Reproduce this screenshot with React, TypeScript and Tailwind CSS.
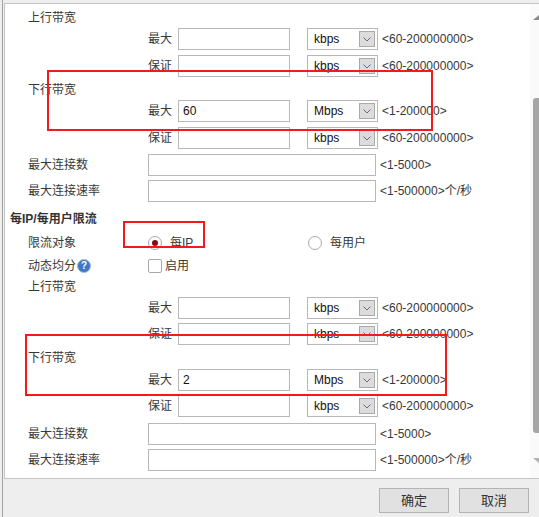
import type { ReactNode } from "react"

const fontStack = "font-['Liberation_Sans','Noto_Sans_CJK_SC',sans-serif]"

function Header({ text, mt }: { text: string; mt: string }) {
  return <div className={`${mt} h-[16px] pl-[23px] pt-[2px] flex items-center leading-none`}>{text}</div>
}

function UnitSelect({ unit }: { unit: string }) {
  return (
    <div className="ml-[17px] w-[71px] h-[22px] border border-[#b8b8b8] bg-white flex items-center justify-between pl-[6px] pr-[2px]">
      <span className="text-[#111]">{unit}</span>
      <span className="w-[16px] h-[16px] bg-[#dcdcdc] border border-[#a9a9a9] flex items-center justify-center">
        <svg width="8" height="5" viewBox="0 0 8 5">
          <path d="M0.5 0.5 L4 4 L7.5 0.5" fill="none" stroke="#6b6b6b" strokeWidth="1" />
        </svg>
      </span>
    </div>
  )
}

function LimitRow({ label, value, unit, range, mt }: { label: string; value?: string; unit: string; range: string; mt: string }) {
  return (
    <div className={`${mt} h-[22px] flex items-center`}>
      <div className="w-[167px] text-right">{label}</div>
      <input
        readOnly
        value={value ?? ""}
        className="ml-[6px] w-[112px] h-[22px] border border-[#b8b8b8] bg-white px-[4px] text-[#111] outline-none"
      />
      <UnitSelect unit={unit} />
      <span className="ml-[4px]">{range}</span>
    </div>
  )
}

function ConnRow({ label, range, mt }: { label: string; range: string; mt: string }) {
  return (
    <div className={`${mt} h-[22px] flex items-center`}>
      <div className="w-[143px] pl-[23px]">{label}</div>
      <input readOnly value="" className="w-[228px] h-[22px] border border-[#b8b8b8] bg-white outline-none" />
      <span className="ml-[4px]">{range}</span>
    </div>
  )
}

function Radio({ checked, children }: { checked?: boolean; children: ReactNode }) {
  return (
    <div className="flex items-center">
      <span className="w-[14px] h-[14px] rounded-full border border-[#a8a8a8] bg-white flex items-center justify-center">
        {checked && <span className="w-[6px] h-[6px] rounded-full bg-[#8b0a0a]" />}
      </span>
      <span className="ml-[8px]">{children}</span>
    </div>
  )
}

function Mark({ className }: { className: string }) {
  return <div className={`absolute border-2 border-[#f21a1a] pointer-events-none ${className}`} />
}

export default function App() {
  return (
    <div className={`relative w-[539px] h-[517px] overflow-hidden bg-[#eeeeee] text-[12px] text-[#383838] ${fontStack}`}>
      <div className="ml-[2px] h-full border-l border-[#a3a3a3] pl-[1px] pt-[3px] flex flex-col">
        <div className="h-[476px] flex border-t border-b border-l border-[#c6c6c6] bg-white">
          <div className="flex-1 flex flex-col">
            <Header text="上行带宽" mt="mt-[5px]" />
            <LimitRow label="最大" unit="kbps" range="<60-200000000>" mt="mt-[3px]" />
            <LimitRow label="保证" unit="kbps" range="<60-200000000>" mt="mt-[5px]" />
            <Header text="下行带宽" mt="mt-[4px]" />
            <LimitRow label="最大" value="60" unit="Mbps" range="<1-200000>" mt="mt-[3px]" />
            <LimitRow label="保证" unit="kbps" range="<60-200000000>" mt="mt-[5px]" />
            <ConnRow label="最大连接数" range="<1-5000>" mt="mt-[5px]" />
            <ConnRow label="最大连接速率" range="<1-500000>个/秒" mt="mt-[4px]" />

            <div className="mt-[8px] h-[16px] pl-[5px] pt-[2px] flex items-center font-bold text-[#333]">每IP/每用户限流</div>
            <div className="mt-[6px] h-[20px] pt-[2px] flex items-center">
              <div className="w-[143px] pl-[23px]">限流对象</div>
              <div className="w-[160px]">
                <Radio checked>每IP</Radio>
              </div>
              <Radio>每用户</Radio>
            </div>
            <div className="mt-[3px] h-[20px] pt-[1px] flex items-center">
              <div className="w-[143px] pl-[23px] flex items-center">
                <span>动态均分</span>
                <span className="ml-[1px] w-[14px] h-[14px] rounded-full bg-[#3f78c4] border border-[#9dbbe3] text-white text-[10px] font-bold flex items-center justify-center leading-none">
                  ?
                </span>
              </div>
              <span className="w-[14px] h-[14px] border border-[#a8a8a8] bg-white rounded-[2px]" />
              <span className="ml-[3px]">启用</span>
            </div>

            <Header text="上行带宽" mt="mt-[3px]" />
            <LimitRow label="最大" unit="kbps" range="<60-200000000>" mt="mt-[3px]" />
            <LimitRow label="保证" unit="kbps" range="<60-200000000>" mt="mt-[4px]" />
            <Header text="下行带宽" mt="mt-[4px]" />
            <LimitRow label="最大" value="2" unit="Mbps" range="<1-200000>" mt="mt-[4px]" />
            <LimitRow label="保证" unit="kbps" range="<60-200000000>" mt="mt-[4px]" />
            <ConnRow label="最大连接数" range="<1-5000>" mt="mt-[6px]" />
            <ConnRow label="最大连接速率" range="<1-500000>个/秒" mt="mt-[4px]" />
          </div>

          {/* scrollbar */}
          <div className="w-[9px] bg-[#fafafa] flex flex-col items-end">
            <div className="mt-[11px] w-0 h-0 border-l-[6px] border-l-transparent border-b-[5px] border-b-[#8a8a8a]" />
            <div className="mt-[78px] w-[6px] h-[335px] rounded-l-[3px] bg-[#a6a6a6]" />
            <div className="mt-[25px] w-0 h-0 border-l-[6px] border-l-transparent border-t-[5px] border-t-[#b0b0b0]" />
          </div>
        </div>

        <div className="flex justify-end gap-[10px] pt-[9px] pr-[10px]">
          <button className="w-[70px] h-[25px] bg-[#e1e1e1] border border-[#b4b4b4] text-[13px] text-[#333]">确定</button>
          <button className="w-[70px] h-[25px] bg-[#e1e1e1] border border-[#b4b4b4] text-[13px] text-[#333]">取消</button>
        </div>
      </div>

      <Mark className="left-[47px] top-[70px] w-[386px] h-[61px]" />
      <Mark className="left-[123px] top-[221px] w-[82px] h-[27px]" />
      <Mark className="left-[25px] top-[334px] w-[422px] h-[62px]" />
    </div>
  )
}
